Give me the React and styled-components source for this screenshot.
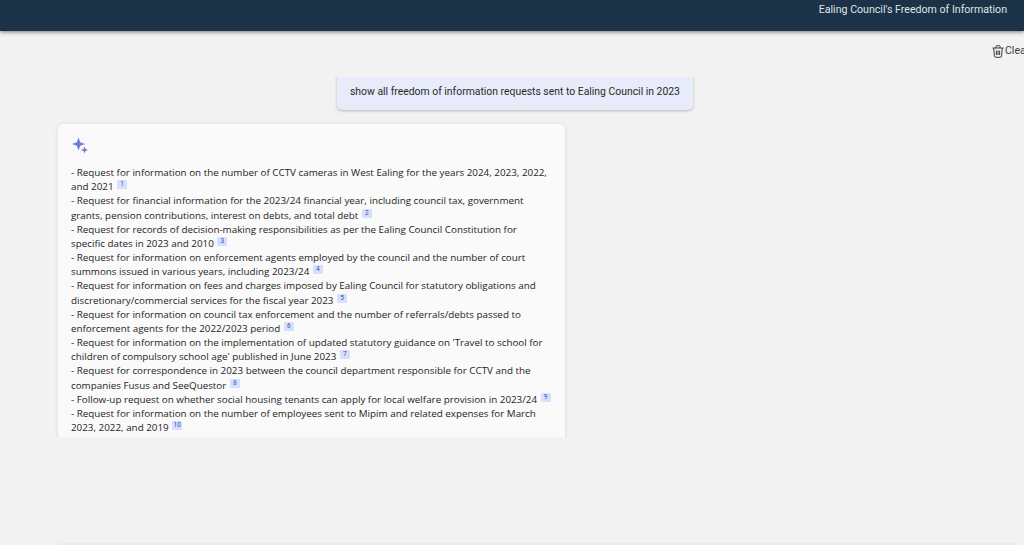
import React from "react";
import styled, { createGlobalStyle } from "styled-components";

const GlobalStyle = createGlobalStyle`
  html, body {
    margin: 0;
    height: 100%;
    overflow: hidden;
    background: #f2f2f2;
  }
  #root {
    height: 100%;
  }
`;

const Page = styled.div`
  height: 545px;
  display: flex;
  flex-direction: column;
  overflow: hidden;
  background: #f2f2f2;
`;

const Header = styled.header`
  flex: none;
  height: 31px;
  display: flex;
  justify-content: flex-end;
  padding: 3px 17px 0 0;
  box-sizing: border-box;
  background: #1c3347;
  box-shadow: 0 1px 4px rgba(0, 0, 0, 0.5);
  color: #dfe4e8;
  font: 400 10.62px/14px Roboto, sans-serif;
`;

const Toolbar = styled.div`
  flex: none;
  height: 46px;
  display: flex;
  justify-content: flex-end;
  padding-top: 13px;
  box-sizing: border-box;
`;

const ClearButton = styled.div`
  height: 14px;
  margin-right: -12px;
  display: flex;
  align-items: center;
  gap: 1px;
  width: 44px;
  flex: none;
  color: #3c3c3c;
  font: 400 10.5px/14px Roboto, sans-serif;
`;

const TrashIcon = styled.svg`
  flex: none;
  width: 12px;
  height: 13px;
  fill: none;
  stroke: currentColor;
  stroke-width: 1;
`;

const Thread = styled.main`
  flex: none;
  height: 360px;
  overflow: hidden;
  display: flex;
  flex-direction: column;
  align-items: flex-start;
  padding: 0 0 0 58px;
`;

const UserBubble = styled.div`
  flex: none;
  margin: -8px 0 14px 279px;
  width: 356px;
  height: 41px;
  box-sizing: border-box;
  padding: 16px 0 0 13px;
  border-radius: 5px;
  background: #e8ebf9;
  box-shadow: 0 1px 3px rgba(0, 0, 0, 0.25);
  color: #2a2a2a;
  white-space: nowrap;
  font: 400 10.4px/14px Roboto, sans-serif;
`;

const AnswerCard = styled.article`
  flex: none;
  width: 507px;
  box-sizing: border-box;
  padding: 13px 13px 30px;
  border-radius: 5px;
  background: #fafafa;
  box-shadow: 0 0 4px rgba(0, 0, 0, 0.1);
`;

const SparkleIcon = styled.svg`
  display: block;
  width: 17px;
  height: 17px;
  margin-bottom: 11px;
  color: #6f78e6;
`;

const Line = styled.div`
  color: #242424;
  font: 400 9.84px/14.17px "Open Sans", sans-serif;
`;

const Citation = styled.sup`
  display: inline-block;
  min-width: 8px;
  height: 9px;
  margin-left: 3.5px;
  padding: 0 1px;
  vertical-align: 4px;
  border-radius: 1px;
  background: #d7e0fb;
  color: #2f4fd0;
  text-align: center;
  font: 400 6.5px/9px Roboto, sans-serif;
`;

const FooterEdge = styled.div`
  flex: none;
  margin: 106px 0 0 58px;
  width: 960px;
  height: 2px;
  background: #ececec;
`;

const requests = [
  "- Request for information on the number of CCTV cameras in West Ealing for the years 2024, 2023, 2022, and 2021",
  "- Request for financial information for the 2023/24 financial year, including council tax, government grants, pension contributions, interest on debts, and total debt",
  "- Request for records of decision-making responsibilities as per the Ealing Council Constitution for specific dates in 2023 and 2010",
  "- Request for information on enforcement agents employed by the council and the number of court summons issued in various years, including 2023/24",
  "- Request for information on fees and charges imposed by Ealing Council for statutory obligations and discretionary/commercial services for the fiscal year 2023",
  "- Request for information on council tax enforcement and the number of referrals/debts passed to enforcement agents for the 2022/2023 period",
  "- Request for information on the implementation of updated statutory guidance on 'Travel to school for children of compulsory school age' published in June 2023",
  "- Request for correspondence in 2023 between the council department responsible for CCTV and the companies Fusus and SeeQuestor",
  "- Follow-up request on whether social housing tenants can apply for local welfare provision in 2023/24",
  "- Request for information on the number of employees sent to Mipim and related expenses for March 2023, 2022, and 2019",
];

export default function App() {
  return (
    <Page>
      <GlobalStyle />
      <Header>Ealing Council's Freedom of Information</Header>
      <Toolbar>
        <ClearButton>
          <TrashIcon viewBox="0 0 12 13">
            <path d="M0.5 3 H11.5 M4 3 V1.5 Q4 0.7 4.8 0.7 H7.2 Q8 0.7 8 1.5 V3" />
            <path d="M1.7 3 L2.4 11 Q2.5 12.3 3.8 12.3 H8.2 Q9.5 12.3 9.6 11 L10.3 3" />
            <path d="M4.4 5.5 V10 M6 5.5 V10 M7.6 5.5 V10" />
          </TrashIcon>
          Clear
        </ClearButton>
      </Toolbar>
      <Thread>
        <UserBubble>show all freedom of information requests sent to Ealing Council in 2023</UserBubble>
        <AnswerCard>
          <SparkleIcon viewBox="0 0 17 17" fill="currentColor">
            <path d="M7.5 0.5 L9.2 5.3 L14 7 L9.2 8.7 L7.5 13.5 L5.8 8.7 L1 7 L5.8 5.3 Z" />
            <path d="M13.5 9.5 L14.5 12 L17 13 L14.5 14 L13.5 16.5 L12.5 14 L10 13 L12.5 12 Z" />
          </SparkleIcon>
          {requests.map((text, i) => (
            <Line key={i}>
              {text}
              <Citation>{i + 1}</Citation>
            </Line>
          ))}
        </AnswerCard>
      </Thread>
      <FooterEdge />
    </Page>
  );
}
